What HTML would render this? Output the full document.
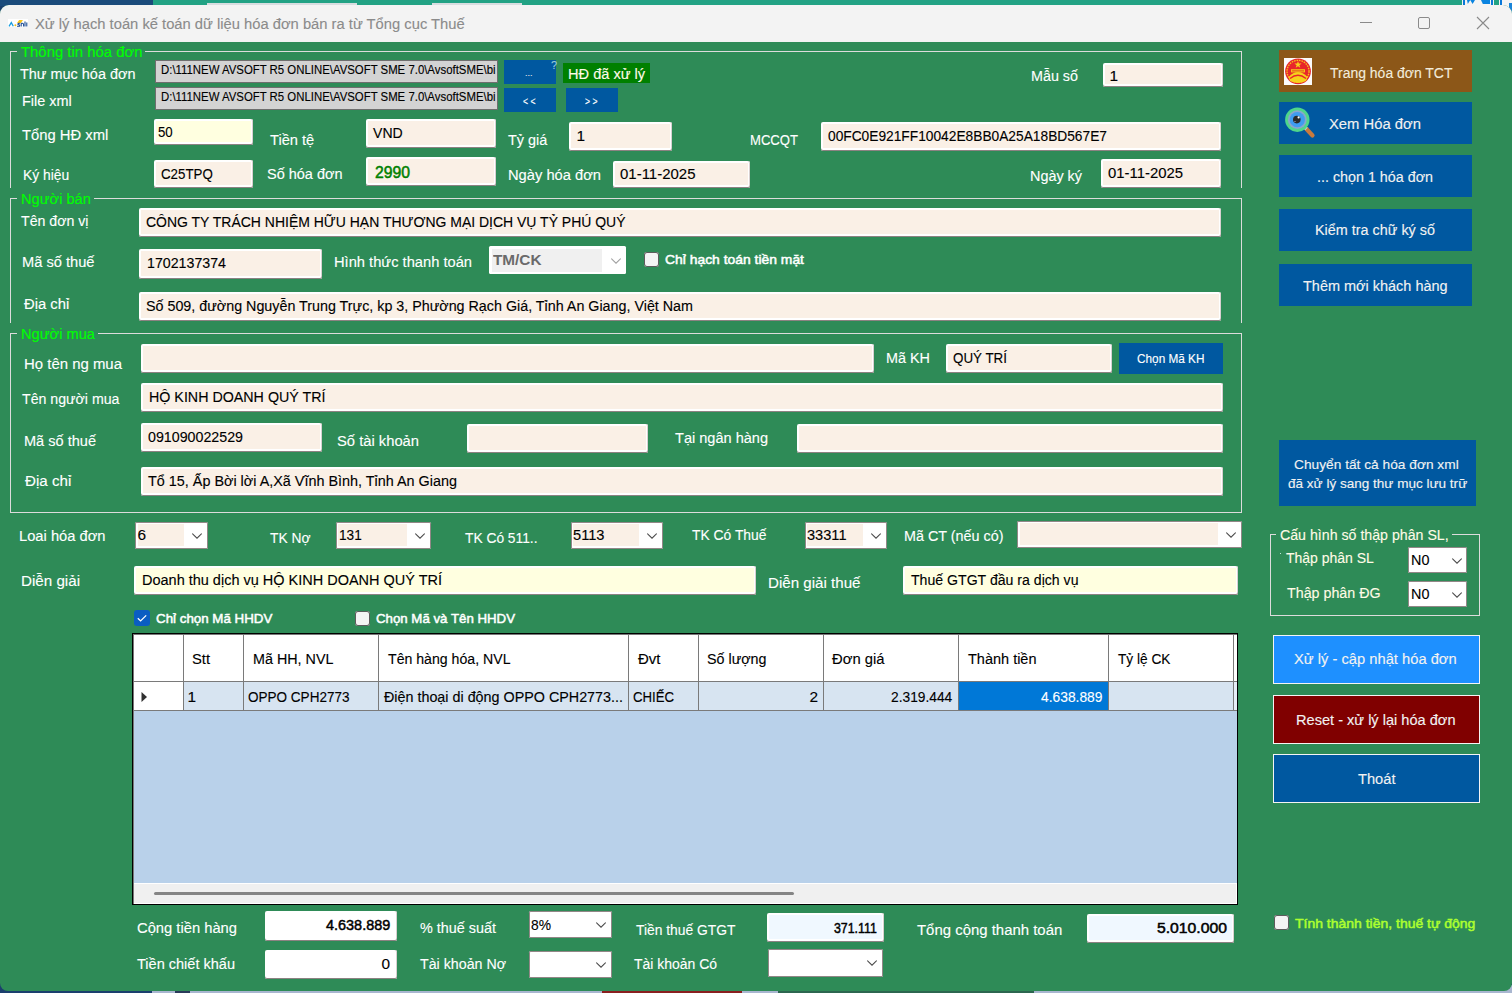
<!DOCTYPE html>
<html><head><meta charset="utf-8"><style>
html,body{margin:0;padding:0;width:1512px;height:993px;overflow:hidden;background:#1b3f6e;}
body>div,body>svg{position:absolute;box-sizing:border-box;}
.t{white-space:pre;font-family:'Liberation Sans', sans-serif;transform-origin:0 0;}
</style></head><body>
<div style="left:0px;top:0px;width:153px;height:6px;background:#1b4b7b;"></div>
<div style="left:153px;top:0px;width:1359px;height:6px;background:#22a284;"></div>
<div style="left:207px;top:3px;width:150px;height:3px;background:#d8dde0;"></div>
<div style="left:432px;top:3px;width:90px;height:3px;background:#d8dde0;"></div>
<div style="left:1462px;top:0px;width:50px;height:16px;background:#f4f4f4;"></div>
<div style="left:1463px;top:0px;width:2px;height:5px;background:#0a78d8;"></div>
<div style="left:1467px;top:0px;width:8px;height:4px;background:#0a84e0;clip-path:polygon(0 0,100% 0,70% 100%,40% 0,10% 100%);"></div>
<div style="left:1481px;top:0px;width:9px;height:4px;background:#0a84e0;clip-path:polygon(0 0,100% 0,100% 100%,20% 100%);"></div>
<div style="left:1491px;top:0px;width:2px;height:5px;background:#0a78d8;"></div>
<div style="left:1494px;top:0px;width:5px;height:5px;background:#22a284;"></div>
<div style="left:1500px;top:0px;width:2px;height:5px;background:#0a78d8;"></div>
<div style="left:1509px;top:3px;width:3px;height:11px;background:#1a84d8;"></div>
<div style="left:0px;top:985px;width:1512px;height:8px;background:#a9b6d0;"></div>
<div style="left:0px;top:985px;width:152px;height:8px;background:#1b3f6e;"></div>
<div style="left:602px;top:985px;width:140px;height:8px;background:#8a1f1f;"></div>
<div style="left:778px;top:985px;width:256px;height:8px;background:#2d6650;"></div>
<div style="left:175px;top:985px;width:15px;height:8px;background:#2a3a5a;"></div>
<div style="left:0px;top:5px;width:1512px;height:986px;background:#2e8b57;border-radius:9px 9px 8px 8px;"></div>
<div style="left:0px;top:5px;width:1512px;height:37px;background:#f3f3f3;border-radius:9px 9px 0 0;"></div>
<svg style="left:8px;top:19px;width:20px;height:8px" viewBox="0 0 20 8"><rect width="20" height="8" fill="#fff"/><path d="M1 7.3 L3.3 3.6 L5.3 7.3" fill="none" stroke="#1a9ee0" stroke-width="1.3"/><circle cx="7.4" cy="6.3" r="1" fill="#f5bd10"/><path d="M9 4 L11.2 1 L15 1 L12.8 4Z" fill="#f8c417"/><path d="M12 4.2 Q9.5 4 10 5.5 Q12.3 6 11.5 7.2 L9 7.2" fill="none" stroke="#1f4d94" stroke-width="1.1"/><path d="M13.2 7.4 L13.2 4.4 Q15.6 3.8 15.6 5.6 L15.6 7.4" fill="none" stroke="#1f4d94" stroke-width="1.1"/><path d="M17 7.4 L17 2.6 M18.8 7.4 L18.8 3.6" stroke="#1f4d94" stroke-width="1.1"/></svg>
<div class="t" style="left:35.3px;top:16.46px;font-size:15.4px;line-height:15.4px;color:#8b8b8b;font-weight:400;-webkit-text-stroke:0.12px currentColor;transform:scaleX(0.9579);">Xử lý hạch toán kế toán dữ liệu hóa đơn bán ra từ Tổng cục Thuế</div>
<div style="left:1360px;top:22px;width:12px;height:1px;background:#8a8a8a;"></div>
<div style="left:1418px;top:17px;width:12px;height:12px;border:1.2px solid #8a8a8a;border-radius:2px"></div>
<svg style="left:1476px;top:16px;width:14px;height:14px" viewBox="0 0 14 14"><path d="M1 1 L13 13 M13 1 L1 13" stroke="#8a8a8a" stroke-width="1.1"/></svg>
<div style="left:10px;top:51px;width:6.5px;height:1px;background:#dcdcdc;"></div>
<div style="left:145px;top:51px;width:1097px;height:1px;background:#dcdcdc;"></div>
<div style="left:10px;top:51px;width:1px;height:137px;background:#dcdcdc;"></div>
<div style="left:1241px;top:51px;width:1px;height:137px;background:#dcdcdc;"></div>
<div class="t" style="left:20.5px;top:44.46px;font-size:15.4px;line-height:15.4px;color:#00ff00;font-weight:400;-webkit-text-stroke:0.12px currentColor;transform:scaleX(0.9672);">Thông tin hóa đơn</div>
<div class="t" style="left:19.5px;top:66.21px;font-size:15.4px;line-height:15.4px;color:#fff;font-weight:400;-webkit-text-stroke:0.12px currentColor;transform:scaleX(0.9385);">Thư mục hóa đơn</div>
<div class="t" style="left:21.5px;top:92.96px;font-size:15.4px;line-height:15.4px;color:#fff;font-weight:400;-webkit-text-stroke:0.12px currentColor;transform:scaleX(0.9384);">File xml</div>
<div class="t" style="left:22px;top:127.46px;font-size:15.4px;line-height:15.4px;color:#fff;font-weight:400;-webkit-text-stroke:0.12px currentColor;transform:scaleX(0.9605);">Tổng HĐ xml</div>
<div class="t" style="left:22.5px;top:166.96px;font-size:15.4px;line-height:15.4px;color:#fff;font-weight:400;-webkit-text-stroke:0.12px currentColor;transform:scaleX(0.9008);">Ký hiệu</div>
<div class="t" style="left:269.5px;top:131.96px;font-size:15.4px;line-height:15.4px;color:#fff;font-weight:400;-webkit-text-stroke:0.12px currentColor;transform:scaleX(0.9519);">Tiền tệ</div>
<div class="t" style="left:267px;top:166.21px;font-size:15.4px;line-height:15.4px;color:#fff;font-weight:400;-webkit-text-stroke:0.12px currentColor;transform:scaleX(0.9404);">Số hóa đơn</div>
<div class="t" style="left:507.5px;top:132.46px;font-size:15.4px;line-height:15.4px;color:#fff;font-weight:400;-webkit-text-stroke:0.12px currentColor;transform:scaleX(0.9363);">Tỷ giá</div>
<div class="t" style="left:507.5px;top:166.96px;font-size:15.4px;line-height:15.4px;color:#fff;font-weight:400;-webkit-text-stroke:0.12px currentColor;transform:scaleX(0.9551);">Ngày hóa đơn</div>
<div class="t" style="left:1030.5px;top:68.46px;font-size:15.4px;line-height:15.4px;color:#fff;font-weight:400;-webkit-text-stroke:0.12px currentColor;transform:scaleX(0.9310);">Mẫu số</div>
<div class="t" style="left:749.5px;top:131.96px;font-size:15.4px;line-height:15.4px;color:#fff;font-weight:400;-webkit-text-stroke:0.12px currentColor;transform:scaleX(0.8505);">MCCQT</div>
<div class="t" style="left:1029.5px;top:168.46px;font-size:15.4px;line-height:15.4px;color:#fff;font-weight:400;-webkit-text-stroke:0.12px currentColor;transform:scaleX(0.9351);">Ngày ký</div>
<div style="left:155px;top:60px;width:343px;height:23px;background:#6e6e6e;"></div>
<div style="left:156px;top:61px;width:341px;height:21px;background:#d3d3d3;"></div>
<div class="t" style="left:160.5px;top:64.00px;font-size:12.4px;line-height:12.4px;color:#000;font-weight:400;-webkit-text-stroke:0.12px currentColor;transform:scaleX(0.9189);">D:\111NEW AVSOFT R5 ONLINE\AVSOFT SME 7.0\AvsoftSME\bi</div>
<div style="left:155px;top:87px;width:343px;height:23px;background:#6e6e6e;"></div>
<div style="left:156px;top:88px;width:341px;height:21px;background:#d3d3d3;"></div>
<div class="t" style="left:160.5px;top:90.80px;font-size:12.4px;line-height:12.4px;color:#000;font-weight:400;-webkit-text-stroke:0.12px currentColor;transform:scaleX(0.9189);">D:\111NEW AVSOFT R5 ONLINE\AVSOFT SME 7.0\AvsoftSME\bi</div>
<div style="left:504px;top:60px;width:52px;height:24px;background:#0058a0;"></div>
<div class="t" style="left:525px;top:68.88px;font-size:9px;line-height:9px;color:#e8e8e8;font-weight:400;-webkit-text-stroke:0.12px currentColor;">...</div>
<div style="left:504px;top:88px;width:52px;height:24px;background:#0058a0;"></div>
<div class="t" style="left:522.5px;top:97.03px;font-size:10px;line-height:10px;color:#fff;font-weight:400;-webkit-text-stroke:0.12px currentColor;transform:scaleX(0.8639);">&lt; &lt;</div>
<div style="left:566px;top:88px;width:52px;height:24px;background:#0058a0;"></div>
<div class="t" style="left:584.5px;top:97.03px;font-size:10px;line-height:10px;color:#fff;font-weight:400;-webkit-text-stroke:0.12px currentColor;transform:scaleX(0.8639);">&gt; &gt;</div>
<div class="t" style="left:551px;top:60.19px;font-size:11px;line-height:11px;color:#9cc8d8;font-weight:400;-webkit-text-stroke:0.12px currentColor;">?</div>
<div style="left:563px;top:63px;width:87px;height:20px;background:#008000;"></div>
<div class="t" style="left:567.7px;top:66.26px;font-size:15.4px;line-height:15.4px;color:#fffbe8;font-weight:400;-webkit-text-stroke:0.12px currentColor;transform:scaleX(0.9484);">HĐ đã xử lý</div>
<div style="left:154px;top:119px;width:99px;height:26px;background:#fff;border-radius:2px;box-shadow:inset 0 -1px 0 #8c8282, inset -1px 0 0 #d8d0d0;"></div>
<div style="left:156px;top:121px;width:95px;height:21px;background:#ffffe0;"></div>
<div class="t" style="left:157.7px;top:124.36px;font-size:15.4px;line-height:15.4px;color:#000;font-weight:400;-webkit-text-stroke:0.12px currentColor;transform:scaleX(0.8584);">50</div>
<div style="left:154px;top:160px;width:99px;height:28px;background:#fff;border-radius:2px;box-shadow:inset 0 -1px 0 #8c8282, inset -1px 0 0 #d8d0d0;"></div>
<div style="left:156px;top:162px;width:95px;height:23px;background:#faf0e6;"></div>
<div class="t" style="left:161.25px;top:166.21px;font-size:15.4px;line-height:15.4px;color:#000;font-weight:400;-webkit-text-stroke:0.12px currentColor;transform:scaleX(0.8643);">C25TPQ</div>
<div style="left:366px;top:119px;width:130px;height:29px;background:#fff;border-radius:2px;box-shadow:inset 0 -1px 0 #8c8282, inset -1px 0 0 #d8d0d0;"></div>
<div style="left:368px;top:121px;width:126px;height:24px;background:#faf0e6;"></div>
<div class="t" style="left:373.3px;top:125.06px;font-size:15.4px;line-height:15.4px;color:#000;font-weight:400;-webkit-text-stroke:0.12px currentColor;transform:scaleX(0.9138);">VND</div>
<div style="left:366px;top:157px;width:130px;height:29px;background:#fff;border-radius:2px;box-shadow:inset 0 -1px 0 #8c8282, inset -1px 0 0 #d8d0d0;"></div>
<div style="left:368px;top:159px;width:126px;height:24px;background:#faf0e6;"></div>
<div class="t" style="left:374.5px;top:164.76px;font-size:16px;line-height:16px;color:#008000;font-weight:400;-webkit-text-stroke:0.5px currentColor;transform:scaleX(0.9833);">2990</div>
<div style="left:569px;top:122px;width:103px;height:29px;background:#fff;border-radius:2px;box-shadow:inset 0 -1px 0 #8c8282, inset -1px 0 0 #d8d0d0;"></div>
<div style="left:571px;top:124px;width:99px;height:24px;background:#faf0e6;"></div>
<div class="t" style="left:576.5px;top:127.96px;font-size:15.4px;line-height:15.4px;color:#000;font-weight:400;-webkit-text-stroke:0.12px currentColor;">1</div>
<div style="left:613px;top:161px;width:137px;height:27px;background:#fff;border-radius:2px;box-shadow:inset 0 -1px 0 #8c8282, inset -1px 0 0 #d8d0d0;"></div>
<div style="left:615px;top:163px;width:133px;height:22px;background:#faf0e6;"></div>
<div class="t" style="left:620px;top:166.46px;font-size:15.4px;line-height:15.4px;color:#000;font-weight:400;-webkit-text-stroke:0.12px currentColor;transform:scaleX(0.9730);">01-11-2025</div>
<div style="left:1103px;top:63px;width:120px;height:24px;background:#fff;border-radius:2px;box-shadow:inset 0 -1px 0 #8c8282, inset -1px 0 0 #d8d0d0;"></div>
<div style="left:1105px;top:65px;width:116px;height:19px;background:#faf0e6;"></div>
<div class="t" style="left:1109.5px;top:67.96px;font-size:15.4px;line-height:15.4px;color:#000;font-weight:400;-webkit-text-stroke:0.12px currentColor;">1</div>
<div style="left:821px;top:122px;width:400px;height:29px;background:#fff;border-radius:2px;box-shadow:inset 0 -1px 0 #8c8282, inset -1px 0 0 #d8d0d0;"></div>
<div style="left:823px;top:124px;width:396px;height:24px;background:#faf0e6;"></div>
<div class="t" style="left:828px;top:127.96px;font-size:15.4px;line-height:15.4px;color:#000;font-weight:400;-webkit-text-stroke:0.12px currentColor;transform:scaleX(0.8933);">00FC0E921FF10042E8BB0A25A18BD567E7</div>
<div style="left:1101px;top:159px;width:120px;height:29px;background:#fff;border-radius:2px;box-shadow:inset 0 -1px 0 #8c8282, inset -1px 0 0 #d8d0d0;"></div>
<div style="left:1103px;top:161px;width:116px;height:24px;background:#faf0e6;"></div>
<div class="t" style="left:1108px;top:164.96px;font-size:15.4px;line-height:15.4px;color:#000;font-weight:400;-webkit-text-stroke:0.12px currentColor;transform:scaleX(0.9666);">01-11-2025</div>
<div style="left:0px;top:188px;width:1250px;height:10px;background:#2e8b57;"></div>
<div style="left:10px;top:198px;width:6.600000000000001px;height:1px;background:#dcdcdc;"></div>
<div style="left:93.5px;top:198px;width:1148.5px;height:1px;background:#dcdcdc;"></div>
<div style="left:10px;top:198px;width:1px;height:124.5px;background:#dcdcdc;"></div>
<div style="left:1241px;top:198px;width:1px;height:124.5px;background:#dcdcdc;"></div>
<div class="t" style="left:20.6px;top:191.46px;font-size:15.4px;line-height:15.4px;color:#00ff00;font-weight:400;-webkit-text-stroke:0.12px currentColor;transform:scaleX(0.9516);">Người bán</div>
<div class="t" style="left:21px;top:213.06px;font-size:15.4px;line-height:15.4px;color:#fff;font-weight:400;-webkit-text-stroke:0.12px currentColor;transform:scaleX(0.9195);">Tên đơn vị</div>
<div class="t" style="left:22px;top:254.46px;font-size:15.4px;line-height:15.4px;color:#fff;font-weight:400;-webkit-text-stroke:0.12px currentColor;transform:scaleX(0.9520);">Mã số thuế</div>
<div class="t" style="left:333.5px;top:254.46px;font-size:15.4px;line-height:15.4px;color:#fff;font-weight:400;-webkit-text-stroke:0.12px currentColor;transform:scaleX(0.9541);">Hình thức thanh toán</div>
<div class="t" style="left:23.5px;top:296.21px;font-size:15.4px;line-height:15.4px;color:#fff;font-weight:400;-webkit-text-stroke:0.12px currentColor;transform:scaleX(0.9618);">Địa chỉ</div>
<div style="left:139px;top:208px;width:1082px;height:29px;background:#fff;border-radius:2px;box-shadow:inset 0 -1px 0 #8c8282, inset -1px 0 0 #d8d0d0;"></div>
<div style="left:141px;top:210px;width:1078px;height:24px;background:#faf0e6;"></div>
<div class="t" style="left:146px;top:213.71px;font-size:15.4px;line-height:15.4px;color:#000;font-weight:400;-webkit-text-stroke:0.12px currentColor;transform:scaleX(0.9081);">CÔNG TY TRÁCH NHIỆM HỮU HẠN THƯƠNG MẠI DỊCH VỤ TỶ PHÚ QUÝ</div>
<div style="left:139px;top:249px;width:183px;height:30px;background:#fff;border-radius:2px;box-shadow:inset 0 -1px 0 #8c8282, inset -1px 0 0 #d8d0d0;"></div>
<div style="left:141px;top:251px;width:179px;height:25px;background:#faf0e6;"></div>
<div class="t" style="left:147px;top:254.96px;font-size:15.4px;line-height:15.4px;color:#000;font-weight:400;-webkit-text-stroke:0.12px currentColor;transform:scaleX(0.9228);">1702137374</div>
<div style="left:489px;top:246px;width:137px;height:28px;background:#fff;border-radius:1.5px;"></div>
<div style="left:491.5px;top:248.5px;width:110.5px;height:23.0px;background:#f0f0f0;"></div>
<svg style="left:611px;top:258px;width:10px;height:6px" viewBox="0 0 10 6"><path d="M0.3 0.5 L5 5.2 L9.7 0.5" fill="none" stroke="#a0a0a0" stroke-width="1.05"/></svg>
<div class="t" style="left:492.5px;top:252.16px;font-size:15.4px;line-height:15.4px;color:#6a6a6a;font-weight:700;transform:scaleX(0.9952);">TM/CK</div>
<div style="left:643.5px;top:251.5px;width:15.0px;height:15.0px;background:#f4f4f4;border-radius:3px;box-shadow:0 0 0 1px #5c5c5c inset;"></div>
<div class="t" style="left:665px;top:253.16px;font-size:13.4px;line-height:13.4px;color:#fff;font-weight:400;-webkit-text-stroke:0.5px currentColor;transform:scaleX(1.0373);">Chỉ hạch toán tiền mặt</div>
<div style="left:139px;top:292px;width:1082px;height:29px;background:#fff;border-radius:2px;box-shadow:inset 0 -1px 0 #8c8282, inset -1px 0 0 #d8d0d0;"></div>
<div style="left:141px;top:294px;width:1078px;height:24px;background:#faf0e6;"></div>
<div class="t" style="left:146px;top:298.21px;font-size:15.4px;line-height:15.4px;color:#000;font-weight:400;-webkit-text-stroke:0.12px currentColor;transform:scaleX(0.9292);">Số 509, đường Nguyễn Trung Trực, kp 3, Phường Rạch Giá, Tỉnh An Giang, Việt Nam</div>
<div style="left:0px;top:322.5px;width:1250px;height:10.5px;background:#2e8b57;"></div>
<div style="left:10px;top:333px;width:6.5px;height:1px;background:#dcdcdc;"></div>
<div style="left:97.5px;top:333px;width:1144.5px;height:1px;background:#dcdcdc;"></div>
<div style="left:10px;top:333px;width:1px;height:179px;background:#dcdcdc;"></div>
<div style="left:1241px;top:333px;width:1px;height:179px;background:#dcdcdc;"></div>
<div style="left:10px;top:512px;width:1232px;height:1px;background:#dcdcdc;"></div>
<div class="t" style="left:20.5px;top:325.96px;font-size:15.4px;line-height:15.4px;color:#00ff00;font-weight:400;-webkit-text-stroke:0.12px currentColor;transform:scaleX(0.9522);">Người mua</div>
<div class="t" style="left:23.5px;top:356.21px;font-size:15.4px;line-height:15.4px;color:#fff;font-weight:400;-webkit-text-stroke:0.12px currentColor;transform:scaleX(0.9706);">Họ tên ng mua</div>
<div class="t" style="left:22px;top:391.21px;font-size:15.4px;line-height:15.4px;color:#fff;font-weight:400;-webkit-text-stroke:0.12px currentColor;transform:scaleX(0.9202);">Tên người mua</div>
<div class="t" style="left:885.5px;top:350.46px;font-size:15.4px;line-height:15.4px;color:#fff;font-weight:400;-webkit-text-stroke:0.12px currentColor;transform:scaleX(0.9352);">Mã KH</div>
<div class="t" style="left:23.5px;top:433.21px;font-size:15.4px;line-height:15.4px;color:#fff;font-weight:400;-webkit-text-stroke:0.12px currentColor;transform:scaleX(0.9454);">Mã số thuế</div>
<div class="t" style="left:337px;top:433.21px;font-size:15.4px;line-height:15.4px;color:#fff;font-weight:400;-webkit-text-stroke:0.12px currentColor;transform:scaleX(0.9582);">Số tài khoản</div>
<div class="t" style="left:674.5px;top:429.96px;font-size:15.4px;line-height:15.4px;color:#fff;font-weight:400;-webkit-text-stroke:0.12px currentColor;transform:scaleX(0.9449);">Tại ngân hàng</div>
<div class="t" style="left:25px;top:473.46px;font-size:15.4px;line-height:15.4px;color:#fff;font-weight:400;-webkit-text-stroke:0.12px currentColor;transform:scaleX(0.9831);">Địa chỉ</div>
<div style="left:141px;top:344px;width:733px;height:29px;background:#fff;border-radius:2px;box-shadow:inset 0 -1px 0 #8c8282, inset -1px 0 0 #d8d0d0;"></div>
<div style="left:143px;top:346px;width:729px;height:24px;background:#faf0e6;"></div>
<div style="left:946px;top:344px;width:166px;height:29px;background:#fff;border-radius:2px;box-shadow:inset 0 -1px 0 #8c8282, inset -1px 0 0 #d8d0d0;"></div>
<div style="left:948px;top:346px;width:162px;height:24px;background:#faf0e6;"></div>
<div class="t" style="left:953px;top:349.96px;font-size:15.4px;line-height:15.4px;color:#000;font-weight:400;-webkit-text-stroke:0.12px currentColor;transform:scaleX(0.8688);">QUÝ TRÍ</div>
<div style="left:1119px;top:343px;width:104px;height:31px;background:#0058a0;"></div>
<div class="t" style="left:1136.5px;top:352.92px;font-size:12.5px;line-height:12.5px;color:#fff;font-weight:400;-webkit-text-stroke:0.12px currentColor;transform:scaleX(0.9432);">Chọn Mã KH</div>
<div style="left:141px;top:383px;width:1082px;height:29px;background:#fff;border-radius:2px;box-shadow:inset 0 -1px 0 #8c8282, inset -1px 0 0 #d8d0d0;"></div>
<div style="left:143px;top:385px;width:1078px;height:24px;background:#faf0e6;"></div>
<div class="t" style="left:148.5px;top:388.96px;font-size:15.4px;line-height:15.4px;color:#000;font-weight:400;-webkit-text-stroke:0.12px currentColor;transform:scaleX(0.9269);">HỘ KINH DOANH QUÝ TRÍ</div>
<div style="left:141px;top:423px;width:181px;height:29px;background:#fff;border-radius:2px;box-shadow:inset 0 -1px 0 #8c8282, inset -1px 0 0 #d8d0d0;"></div>
<div style="left:143px;top:425px;width:177px;height:24px;background:#faf0e6;"></div>
<div class="t" style="left:148px;top:429.46px;font-size:15.4px;line-height:15.4px;color:#000;font-weight:400;-webkit-text-stroke:0.12px currentColor;transform:scaleX(0.9249);">091090022529</div>
<div style="left:467px;top:424px;width:181px;height:29px;background:#fff;border-radius:2px;box-shadow:inset 0 -1px 0 #8c8282, inset -1px 0 0 #d8d0d0;"></div>
<div style="left:469px;top:426px;width:177px;height:24px;background:#faf0e6;"></div>
<div style="left:797px;top:424px;width:426px;height:29px;background:#fff;border-radius:2px;box-shadow:inset 0 -1px 0 #8c8282, inset -1px 0 0 #d8d0d0;"></div>
<div style="left:799px;top:426px;width:422px;height:24px;background:#faf0e6;"></div>
<div style="left:141px;top:467px;width:1082px;height:29px;background:#fff;border-radius:2px;box-shadow:inset 0 -1px 0 #8c8282, inset -1px 0 0 #d8d0d0;"></div>
<div style="left:143px;top:469px;width:1078px;height:24px;background:#faf0e6;"></div>
<div class="t" style="left:148px;top:472.96px;font-size:15.4px;line-height:15.4px;color:#000;font-weight:400;-webkit-text-stroke:0.12px currentColor;transform:scaleX(0.9350);">Tổ 15, Ấp Bời lời A,Xã Vĩnh Bình, Tỉnh An Giang</div>
<div class="t" style="left:18.5px;top:527.96px;font-size:15.4px;line-height:15.4px;color:#fff;font-weight:400;-webkit-text-stroke:0.12px currentColor;transform:scaleX(0.9553);">Loai hóa đơn</div>
<div style="left:135px;top:521.5px;width:72.5px;height:27.0px;background:#fff;border-radius:1.5px;box-shadow:0 0 0 1px rgba(110,95,95,0.75) inset;"></div>
<div style="left:137.5px;top:524.0px;width:46.5px;height:22.0px;background:#faf0e6;"></div>
<svg style="left:192px;top:533px;width:10px;height:6px" viewBox="0 0 10 6"><path d="M0.3 0.5 L5 5.2 L9.7 0.5" fill="none" stroke="#4a4a4a" stroke-width="1.05"/></svg>
<div class="t" style="left:137.6px;top:527.26px;font-size:15.4px;line-height:15.4px;color:#000;font-weight:400;-webkit-text-stroke:0.12px currentColor;">6</div>
<div class="t" style="left:269.5px;top:529.96px;font-size:15.4px;line-height:15.4px;color:#fff;font-weight:400;-webkit-text-stroke:0.12px currentColor;transform:scaleX(0.8969);">TK Nợ</div>
<div style="left:335.5px;top:521.5px;width:95.0px;height:27.0px;background:#fff;border-radius:1.5px;box-shadow:0 0 0 1px rgba(110,95,95,0.75) inset;"></div>
<div style="left:338.0px;top:524.0px;width:69.0px;height:22.0px;background:#faf0e6;"></div>
<svg style="left:415px;top:533px;width:10px;height:6px" viewBox="0 0 10 6"><path d="M0.3 0.5 L5 5.2 L9.7 0.5" fill="none" stroke="#4a4a4a" stroke-width="1.05"/></svg>
<div class="t" style="left:338.5px;top:526.96px;font-size:15.4px;line-height:15.4px;color:#000;font-weight:400;-webkit-text-stroke:0.12px currentColor;transform:scaleX(0.8856);">131</div>
<div class="t" style="left:464.5px;top:529.96px;font-size:15.4px;line-height:15.4px;color:#fff;font-weight:400;-webkit-text-stroke:0.12px currentColor;transform:scaleX(0.8952);">TK Có 511..</div>
<div style="left:570.5px;top:521.5px;width:92.0px;height:27.0px;background:#fff;border-radius:1.5px;box-shadow:0 0 0 1px rgba(110,95,95,0.75) inset;"></div>
<div style="left:573.0px;top:524.0px;width:66.0px;height:22.0px;background:#faf0e6;"></div>
<svg style="left:647px;top:533px;width:10px;height:6px" viewBox="0 0 10 6"><path d="M0.3 0.5 L5 5.2 L9.7 0.5" fill="none" stroke="#4a4a4a" stroke-width="1.05"/></svg>
<div class="t" style="left:573px;top:526.96px;font-size:15.4px;line-height:15.4px;color:#000;font-weight:400;-webkit-text-stroke:0.12px currentColor;transform:scaleX(0.9514);">5113</div>
<div class="t" style="left:691.5px;top:527.46px;font-size:15.4px;line-height:15.4px;color:#fff;font-weight:400;-webkit-text-stroke:0.12px currentColor;transform:scaleX(0.9008);">TK Có Thuế</div>
<div style="left:804.5px;top:521.5px;width:82.0px;height:27.0px;background:#fff;border-radius:1.5px;box-shadow:0 0 0 1px rgba(110,95,95,0.75) inset;"></div>
<div style="left:807.0px;top:524.0px;width:56.0px;height:22.0px;background:#faf0e6;"></div>
<svg style="left:871px;top:533px;width:10px;height:6px" viewBox="0 0 10 6"><path d="M0.3 0.5 L5 5.2 L9.7 0.5" fill="none" stroke="#4a4a4a" stroke-width="1.05"/></svg>
<div class="t" style="left:807px;top:526.96px;font-size:15.4px;line-height:15.4px;color:#000;font-weight:400;-webkit-text-stroke:0.12px currentColor;transform:scaleX(0.9482);">33311</div>
<div class="t" style="left:904px;top:527.96px;font-size:15.4px;line-height:15.4px;color:#fff;font-weight:400;-webkit-text-stroke:0.12px currentColor;transform:scaleX(0.9330);">Mã CT (nếu có)</div>
<div style="left:1017px;top:520.5px;width:224.5px;height:27.0px;background:#fff;border-radius:1.5px;box-shadow:0 0 0 1px rgba(110,95,95,0.75) inset;"></div>
<div style="left:1019.5px;top:523.0px;width:198.5px;height:22.0px;background:#faf0e6;"></div>
<svg style="left:1226px;top:532px;width:10px;height:6px" viewBox="0 0 10 6"><path d="M0.3 0.5 L5 5.2 L9.7 0.5" fill="none" stroke="#4a4a4a" stroke-width="1.05"/></svg>
<div class="t" style="left:20.5px;top:573.21px;font-size:15.4px;line-height:15.4px;color:#fff;font-weight:400;-webkit-text-stroke:0.12px currentColor;transform:scaleX(0.9851);">Diễn giải</div>
<div style="left:134px;top:566px;width:622px;height:29px;background:#fff;border-radius:2px;box-shadow:inset 0 -1px 0 #8c8282, inset -1px 0 0 #d8d0d0;"></div>
<div style="left:136px;top:568px;width:618px;height:24px;background:#ffffe0;"></div>
<div class="t" style="left:141.5px;top:571.96px;font-size:15.4px;line-height:15.4px;color:#000;font-weight:400;-webkit-text-stroke:0.12px currentColor;transform:scaleX(0.9412);">Doanh thu dịch vụ HỘ KINH DOANH QUÝ TRÍ</div>
<div class="t" style="left:767.5px;top:574.96px;font-size:15.4px;line-height:15.4px;color:#fff;font-weight:400;-webkit-text-stroke:0.12px currentColor;transform:scaleX(0.9827);">Diễn giải thuế</div>
<div style="left:903px;top:566px;width:335px;height:29px;background:#fff;border-radius:2px;box-shadow:inset 0 -1px 0 #8c8282, inset -1px 0 0 #d8d0d0;"></div>
<div style="left:905px;top:568px;width:331px;height:24px;background:#ffffe0;"></div>
<div class="t" style="left:910.5px;top:571.96px;font-size:15.4px;line-height:15.4px;color:#000;font-weight:400;-webkit-text-stroke:0.12px currentColor;transform:scaleX(0.9164);">Thuế GTGT đầu ra dịch vụ</div>
<div style="left:134px;top:610px;width:16px;height:16px;background:#0a5dc2;border-radius:3px;"></div>
<svg style="left:134px;top:610px;width:16px;height:16px" viewBox="0 0 16 16"><path d="M3.8 8.2 L6.6 10.9 L12.2 5.4" fill="none" stroke="#fff" stroke-width="1.3"/></svg>
<div class="t" style="left:156.4px;top:612.16px;font-size:13.4px;line-height:13.4px;color:#fff;font-weight:400;-webkit-text-stroke:0.5px currentColor;transform:scaleX(0.9962);">Chỉ chọn Mã HHDV</div>
<div style="left:354.5px;top:610.5px;width:15.0px;height:15.0px;background:#f4f4f4;border-radius:3px;box-shadow:0 0 0 1px #5c5c5c inset;"></div>
<div class="t" style="left:376px;top:612.16px;font-size:13.4px;line-height:13.4px;color:#fff;font-weight:400;-webkit-text-stroke:0.5px currentColor;transform:scaleX(0.9899);">Chọn Mã và Tên HHDV</div>
<div style="left:132px;top:633px;width:1106px;height:272px;background:#000;"></div>
<div style="left:133px;top:634px;width:1104px;height:270px;background:#787878;"></div>
<div style="left:134px;top:635px;width:1103px;height:269px;background:#b9d1ea;"></div>
<div style="left:134px;top:635px;width:1103px;height:46px;background:#fff;"></div>
<div style="left:134px;top:681px;width:1103px;height:1px;background:#7a7a7a;"></div>
<div style="left:134px;top:682px;width:1103px;height:28px;background:#d7e4f1;"></div>
<div style="left:134px;top:682px;width:49.5px;height:28px;background:#fff;"></div>
<div style="left:1234px;top:682px;width:3px;height:28px;background:#e6eef8;"></div>
<div style="left:134px;top:710px;width:1103px;height:1px;background:#7a7a7a;"></div>
<div style="left:183.0px;top:635px;width:1.0px;height:75.5px;background:#7a7a7a;"></div>
<div style="left:243.0px;top:635px;width:1.0px;height:75.5px;background:#7a7a7a;"></div>
<div style="left:378.0px;top:635px;width:1.0px;height:75.5px;background:#7a7a7a;"></div>
<div style="left:628.0px;top:635px;width:1.0px;height:75.5px;background:#7a7a7a;"></div>
<div style="left:698.0px;top:635px;width:1.0px;height:75.5px;background:#7a7a7a;"></div>
<div style="left:823.0px;top:635px;width:1.0px;height:75.5px;background:#7a7a7a;"></div>
<div style="left:958.0px;top:635px;width:1.0px;height:75.5px;background:#7a7a7a;"></div>
<div style="left:1108.0px;top:635px;width:1.0px;height:75.5px;background:#7a7a7a;"></div>
<div style="left:1233.0px;top:635px;width:1.0px;height:75.5px;background:#7a7a7a;"></div>
<div style="left:959px;top:682px;width:149px;height:28px;background:#0078d7;"></div>
<svg style="left:139px;top:690px;width:10px;height:14px" viewBox="0 0 10 14"><path d="M2.5 2 L8 7 L2.5 12Z" fill="#303030"/></svg>
<div class="t" style="left:192px;top:651.21px;font-size:15.4px;line-height:15.4px;color:#000;font-weight:400;-webkit-text-stroke:0.12px currentColor;transform:scaleX(0.9560);">Stt</div>
<div class="t" style="left:252.5px;top:651.21px;font-size:15.4px;line-height:15.4px;color:#000;font-weight:400;-webkit-text-stroke:0.12px currentColor;transform:scaleX(0.9318);">Mã HH, NVL</div>
<div class="t" style="left:387.5px;top:651.21px;font-size:15.4px;line-height:15.4px;color:#000;font-weight:400;-webkit-text-stroke:0.12px currentColor;transform:scaleX(0.9177);">Tên hàng hóa, NVL</div>
<div class="t" style="left:637.5px;top:651.21px;font-size:15.4px;line-height:15.4px;color:#000;font-weight:400;-webkit-text-stroke:0.12px currentColor;transform:scaleX(0.9743);">Đvt</div>
<div class="t" style="left:707px;top:651.21px;font-size:15.4px;line-height:15.4px;color:#000;font-weight:400;-webkit-text-stroke:0.12px currentColor;transform:scaleX(0.9290);">Số lượng</div>
<div class="t" style="left:832px;top:651.21px;font-size:15.4px;line-height:15.4px;color:#000;font-weight:400;-webkit-text-stroke:0.12px currentColor;transform:scaleX(0.9616);">Đơn giá</div>
<div class="t" style="left:967.5px;top:651.21px;font-size:15.4px;line-height:15.4px;color:#000;font-weight:400;-webkit-text-stroke:0.12px currentColor;transform:scaleX(0.9418);">Thành tiền</div>
<div class="t" style="left:1117.5px;top:651.21px;font-size:15.4px;line-height:15.4px;color:#000;font-weight:400;-webkit-text-stroke:0.12px currentColor;transform:scaleX(0.8896);">Tỷ lệ CK</div>
<div class="t" style="left:187.5px;top:688.71px;font-size:15.4px;line-height:15.4px;color:#000;font-weight:400;-webkit-text-stroke:0.12px currentColor;">1</div>
<div class="t" style="left:248px;top:688.71px;font-size:15.4px;line-height:15.4px;color:#000;font-weight:400;-webkit-text-stroke:0.12px currentColor;transform:scaleX(0.8789);">OPPO CPH2773</div>
<div class="t" style="left:383.5px;top:688.71px;font-size:15.4px;line-height:15.4px;color:#000;font-weight:400;-webkit-text-stroke:0.12px currentColor;transform:scaleX(0.9311);">Điện thoại di động OPPO CPH2773...</div>
<div class="t" style="left:633px;top:688.71px;font-size:15.4px;line-height:15.4px;color:#000;font-weight:400;-webkit-text-stroke:0.12px currentColor;transform:scaleX(0.8561);">CHIẾC</div>
<div class="t" style="left:809.5px;top:688.71px;font-size:15.4px;line-height:15.4px;color:#000;font-weight:400;-webkit-text-stroke:0.12px currentColor;">2</div>
<div class="t" style="left:891.25px;top:688.71px;font-size:15.4px;line-height:15.4px;color:#000;font-weight:400;-webkit-text-stroke:0.12px currentColor;transform:scaleX(0.8944);">2.319.444</div>
<div class="t" style="left:1041px;top:688.71px;font-size:15.4px;line-height:15.4px;color:#fff;font-weight:400;-webkit-text-stroke:0.12px currentColor;transform:scaleX(0.8980);">4.638.889</div>
<div style="left:134px;top:883px;width:1103px;height:21px;background:#fff;"></div>
<div style="left:134px;top:884px;width:1102px;height:19px;background:#f0f0f0;"></div>
<div style="left:154px;top:892px;width:640px;height:3px;background:#858585;border-radius:2px;"></div>
<div class="t" style="left:136.5px;top:920.46px;font-size:15.4px;line-height:15.4px;color:#fff;font-weight:400;-webkit-text-stroke:0.12px currentColor;transform:scaleX(0.9578);">Cộng tiền hàng</div>
<div style="left:265px;top:911px;width:132px;height:30px;background:#fff;border-radius:2px;box-shadow:inset 0 -1px 0 #8c8282, inset -1px 0 0 #d8d0d0;"></div>
<div style="left:267px;top:913px;width:128px;height:25px;background:#fff;"></div>
<div class="t" style="left:325.5px;top:917.46px;font-size:15.4px;line-height:15.4px;color:#000;font-weight:400;-webkit-text-stroke:0.5px currentColor;transform:scaleX(0.9389);">4.638.889</div>
<div class="t" style="left:136.5px;top:956.21px;font-size:15.4px;line-height:15.4px;color:#fff;font-weight:400;-webkit-text-stroke:0.12px currentColor;transform:scaleX(0.9440);">Tiền chiết khấu</div>
<div style="left:265px;top:950px;width:132px;height:29px;background:#fff;border-radius:2px;box-shadow:inset 0 -1px 0 #8c8282, inset -1px 0 0 #d8d0d0;"></div>
<div style="left:267px;top:952px;width:128px;height:24px;background:#fff;"></div>
<div class="t" style="left:381.5px;top:956.46px;font-size:15.4px;line-height:15.4px;color:#000;font-weight:400;-webkit-text-stroke:0.12px currentColor;">0</div>
<div class="t" style="left:420px;top:920.46px;font-size:15.4px;line-height:15.4px;color:#fff;font-weight:400;-webkit-text-stroke:0.12px currentColor;transform:scaleX(0.9348);">% thuế suất</div>
<div style="left:528.5px;top:911.3px;width:83.10000000000002px;height:27.100000000000023px;background:#fff;border-radius:1.5px;box-shadow:0 0 0 1px rgba(110,95,95,0.75) inset;"></div>
<svg style="left:596px;top:922px;width:10px;height:6px" viewBox="0 0 10 6"><path d="M0.3 0.5 L5 5.2 L9.7 0.5" fill="none" stroke="#4a4a4a" stroke-width="1.05"/></svg>
<div class="t" style="left:531px;top:916.96px;font-size:15.4px;line-height:15.4px;color:#000;font-weight:400;-webkit-text-stroke:0.12px currentColor;transform:scaleX(0.8989);">8%</div>
<div class="t" style="left:420px;top:956.21px;font-size:15.4px;line-height:15.4px;color:#fff;font-weight:400;-webkit-text-stroke:0.12px currentColor;transform:scaleX(0.9240);">Tài khoản Nợ</div>
<div style="left:528.5px;top:950.5px;width:83.0px;height:27.0px;background:#fff;border-radius:1.5px;box-shadow:0 0 0 1px rgba(110,95,95,0.75) inset;"></div>
<svg style="left:596px;top:962px;width:10px;height:6px" viewBox="0 0 10 6"><path d="M0.3 0.5 L5 5.2 L9.7 0.5" fill="none" stroke="#4a4a4a" stroke-width="1.05"/></svg>
<div class="t" style="left:636px;top:921.96px;font-size:15.4px;line-height:15.4px;color:#fff;font-weight:400;-webkit-text-stroke:0.12px currentColor;transform:scaleX(0.8994);">Tiền thuế GTGT</div>
<div style="left:767px;top:913px;width:117px;height:29px;background:#fff;border-radius:2px;box-shadow:inset 0 -1px 0 #8c8282, inset -1px 0 0 #d8d0d0;"></div>
<div style="left:769px;top:915px;width:113px;height:24px;background:#f0f8ff;"></div>
<div class="t" style="left:833.7px;top:919.96px;font-size:15.4px;line-height:15.4px;color:#000;font-weight:400;-webkit-text-stroke:0.5px currentColor;transform:scaleX(0.8021);">371.111</div>
<div class="t" style="left:633.5px;top:956.21px;font-size:15.4px;line-height:15.4px;color:#fff;font-weight:400;-webkit-text-stroke:0.12px currentColor;transform:scaleX(0.9066);">Tài khoản Có</div>
<div style="left:767.5px;top:949px;width:115.0px;height:27.5px;background:#fff;border-radius:1.5px;box-shadow:0 0 0 1px rgba(110,95,95,0.75) inset;"></div>
<svg style="left:867px;top:960px;width:10px;height:6px" viewBox="0 0 10 6"><path d="M0.3 0.5 L5 5.2 L9.7 0.5" fill="none" stroke="#4a4a4a" stroke-width="1.05"/></svg>
<div class="t" style="left:916.7px;top:922.16px;font-size:15.4px;line-height:15.4px;color:#fff;font-weight:400;-webkit-text-stroke:0.12px currentColor;transform:scaleX(0.9702);">Tổng cộng thanh toán</div>
<div style="left:1087px;top:914px;width:147px;height:29px;background:#fff;border-radius:2px;box-shadow:inset 0 -1px 0 #8c8282, inset -1px 0 0 #d8d0d0;"></div>
<div style="left:1089px;top:916px;width:143px;height:24px;background:#f0f8ff;"></div>
<div class="t" style="left:1156.6px;top:920.46px;font-size:15.4px;line-height:15.4px;color:#000;font-weight:400;-webkit-text-stroke:0.5px currentColor;transform:scaleX(1.0221);">5.010.000</div>
<div style="left:1279px;top:50px;width:193px;height:42px;background:#8c5718;"></div>
<svg style="left:1284px;top:58px;width:28px;height:27px" viewBox="0 0 28 27"><rect width="28" height="27" fill="#fbfbfb"/><circle cx="14" cy="13.3" r="12.9" fill="#e8262b"/><circle cx="14" cy="13.3" r="11" fill="none" stroke="#f6c21a" stroke-width="1.3" stroke-dasharray="1.6 0.9"/><path d="M4.5 19 Q14 9 23.5 19 L22 23 Q14 27 6 23Z" fill="#f6d11c"/><path d="M6 20.5 Q14 14 22 20.5" fill="none" stroke="#e8262b" stroke-width="1.4"/><rect x="7" y="11.2" width="14" height="3.2" fill="#f6c21a"/><rect x="8" y="12" width="12" height="1.6" fill="#e87a1b"/><path d="M14 3 L14.9 5.6 L17.6 5.6 L15.4 7.2 L16.3 9.8 L14 8.2 L11.7 9.8 L12.6 7.2 L10.4 5.6 L13.1 5.6Z" fill="#f6d11c"/></svg>
<div class="t" style="left:1329.5px;top:64.96px;font-size:15.4px;line-height:15.4px;color:#f2ecdc;font-weight:400;-webkit-text-stroke:0.12px currentColor;transform:scaleX(0.9074);">Trang hóa đơn TCT</div>
<div style="left:1279px;top:102px;width:193px;height:42px;background:#0058a0;"></div>
<svg style="left:1284px;top:107px;width:32px;height:32px" viewBox="0 0 32 32"><line x1="22.5" y1="22" x2="28.5" y2="28.5" stroke="#c97a3e" stroke-width="4.2" stroke-linecap="round"/><line x1="20" y1="19.5" x2="22.5" y2="22" stroke="#c8c8c8" stroke-width="3.6"/><circle cx="13.3" cy="12.7" r="12.2" fill="#4fd68a"/><circle cx="13.3" cy="12.7" r="9.4" fill="#8aa6cc"/><circle cx="13.3" cy="12.7" r="7.6" fill="#3f9cf0"/><circle cx="12.8" cy="12.6" r="3.8" fill="#2a2a2a"/><circle cx="14.6" cy="10.4" r="1.1" fill="#fff"/><circle cx="11" cy="14.5" r="0.5" fill="#ddd"/></svg>
<div class="t" style="left:1329px;top:116.21px;font-size:15.4px;line-height:15.4px;color:#f2f2f2;font-weight:400;-webkit-text-stroke:0.12px currentColor;transform:scaleX(0.9618);">Xem Hóa đơn</div>
<div style="left:1279px;top:155px;width:193px;height:42px;background:#0058a0;"></div>
<div class="t" style="left:1317px;top:169.46px;font-size:15.4px;line-height:15.4px;color:#f2f2f2;font-weight:400;-webkit-text-stroke:0.12px currentColor;transform:scaleX(0.9297);">... chọn 1 hóa đơn</div>
<div style="left:1279px;top:209px;width:193px;height:42px;background:#0058a0;"></div>
<div class="t" style="left:1314.7px;top:222.46px;font-size:15.4px;line-height:15.4px;color:#f2f2f2;font-weight:400;-webkit-text-stroke:0.12px currentColor;transform:scaleX(0.9350);">Kiểm tra chữ ký số</div>
<div style="left:1279px;top:264px;width:193px;height:42px;background:#0058a0;"></div>
<div class="t" style="left:1302.7px;top:277.76px;font-size:15.4px;line-height:15.4px;color:#f2f2f2;font-weight:400;-webkit-text-stroke:0.12px currentColor;transform:scaleX(0.9401);">Thêm mới khách hàng</div>
<div style="left:1279px;top:440px;width:197px;height:66px;background:#0058a0;"></div>
<div class="t" style="left:1294px;top:457.77px;font-size:13.5px;line-height:13.5px;color:#f2f2f2;font-weight:400;-webkit-text-stroke:0.12px currentColor;transform:scaleX(1.0170);">Chuyển tất cả hóa đơn xml</div>
<div class="t" style="left:1287.5px;top:476.57px;font-size:13.5px;line-height:13.5px;color:#f2f2f2;font-weight:400;-webkit-text-stroke:0.12px currentColor;transform:scaleX(1.0027);">đã xử lý sang thư mục lưu trữ</div>
<div style="left:1270px;top:534px;width:6.2999999999999545px;height:1px;background:#dcdcdc;"></div>
<div style="left:1452px;top:534px;width:28px;height:1px;background:#dcdcdc;"></div>
<div style="left:1270px;top:534px;width:1px;height:81px;background:#dcdcdc;"></div>
<div style="left:1479px;top:534px;width:1px;height:81px;background:#dcdcdc;"></div>
<div style="left:1270px;top:615px;width:210px;height:1px;background:#dcdcdc;"></div>
<div class="t" style="left:1280.3px;top:527.16px;font-size:15.4px;line-height:15.4px;color:#fffbe6;font-weight:400;-webkit-text-stroke:0.12px currentColor;transform:scaleX(0.9212);">Cấu hình số thập phân SL,</div>
<div style="left:1280px;top:553px;width:1px;height:1px;background:#bfe8d8;"></div>
<div class="t" style="left:1286.3px;top:550.46px;font-size:15.4px;line-height:15.4px;color:#fffbe6;font-weight:400;-webkit-text-stroke:0.12px currentColor;transform:scaleX(0.9090);">Thập phân SL</div>
<div class="t" style="left:1286.7px;top:584.96px;font-size:15.4px;line-height:15.4px;color:#fffbe6;font-weight:400;-webkit-text-stroke:0.12px currentColor;transform:scaleX(0.9270);">Thập phân ĐG</div>
<div style="left:1408.3px;top:546.7px;width:59.200000000000045px;height:26.59999999999991px;background:#fff;border-radius:1.5px;box-shadow:0 0 0 1px rgba(110,95,95,0.75) inset;"></div>
<svg style="left:1452px;top:558px;width:10px;height:6px" viewBox="0 0 10 6"><path d="M0.3 0.5 L5 5.2 L9.7 0.5" fill="none" stroke="#4a4a4a" stroke-width="1.05"/></svg>
<div class="t" style="left:1411.3px;top:552.16px;font-size:15.4px;line-height:15.4px;color:#000;font-weight:400;-webkit-text-stroke:0.12px currentColor;transform:scaleX(0.9346);">N0</div>
<div style="left:1408.3px;top:580.7px;width:59.200000000000045px;height:26.59999999999991px;background:#fff;border-radius:1.5px;box-shadow:0 0 0 1px rgba(110,95,95,0.75) inset;"></div>
<svg style="left:1452px;top:592px;width:10px;height:6px" viewBox="0 0 10 6"><path d="M0.3 0.5 L5 5.2 L9.7 0.5" fill="none" stroke="#4a4a4a" stroke-width="1.05"/></svg>
<div class="t" style="left:1411.3px;top:586.16px;font-size:15.4px;line-height:15.4px;color:#000;font-weight:400;-webkit-text-stroke:0.12px currentColor;transform:scaleX(0.9346);">N0</div>
<div style="left:1273px;top:635.3px;width:207px;height:48.40000000000009px;background:#1e90ff;box-shadow:0 0 0 1px #f4f4f4 inset;"></div>
<div class="t" style="left:1294px;top:651.46px;font-size:15.4px;line-height:15.4px;color:#f2f2f2;font-weight:400;-webkit-text-stroke:0.12px currentColor;transform:scaleX(0.9564);">Xử lý - cập nhật hóa đơn</div>
<div style="left:1273px;top:695px;width:207px;height:48.700000000000045px;background:#800000;box-shadow:0 0 0 1px #f4f4f4 inset;"></div>
<div class="t" style="left:1296.3px;top:712.16px;font-size:15.4px;line-height:15.4px;color:#f2f2f2;font-weight:400;-webkit-text-stroke:0.12px currentColor;transform:scaleX(0.9472);">Reset - xử lý lại hóa đơn</div>
<div style="left:1273px;top:754px;width:207px;height:48.700000000000045px;background:#0058a0;box-shadow:0 0 0 1px #f4f4f4 inset;"></div>
<div class="t" style="left:1357.5px;top:771.16px;font-size:15.4px;line-height:15.4px;color:#f2f2f2;font-weight:400;-webkit-text-stroke:0.12px currentColor;transform:scaleX(0.9528);">Thoát</div>
<div style="left:1273.5px;top:915.4px;width:15.099999999999909px;height:15.100000000000023px;background:#f4f4f4;border-radius:3px;box-shadow:0 0 0 1px #5c5c5c inset;"></div>
<div class="t" style="left:1295.4px;top:916.99px;font-size:13.6px;line-height:13.6px;color:#adff2f;font-weight:400;-webkit-text-stroke:0.5px currentColor;transform:scaleX(1.0281);">Tính thành tiền, thuế tự động</div>
</body></html>
